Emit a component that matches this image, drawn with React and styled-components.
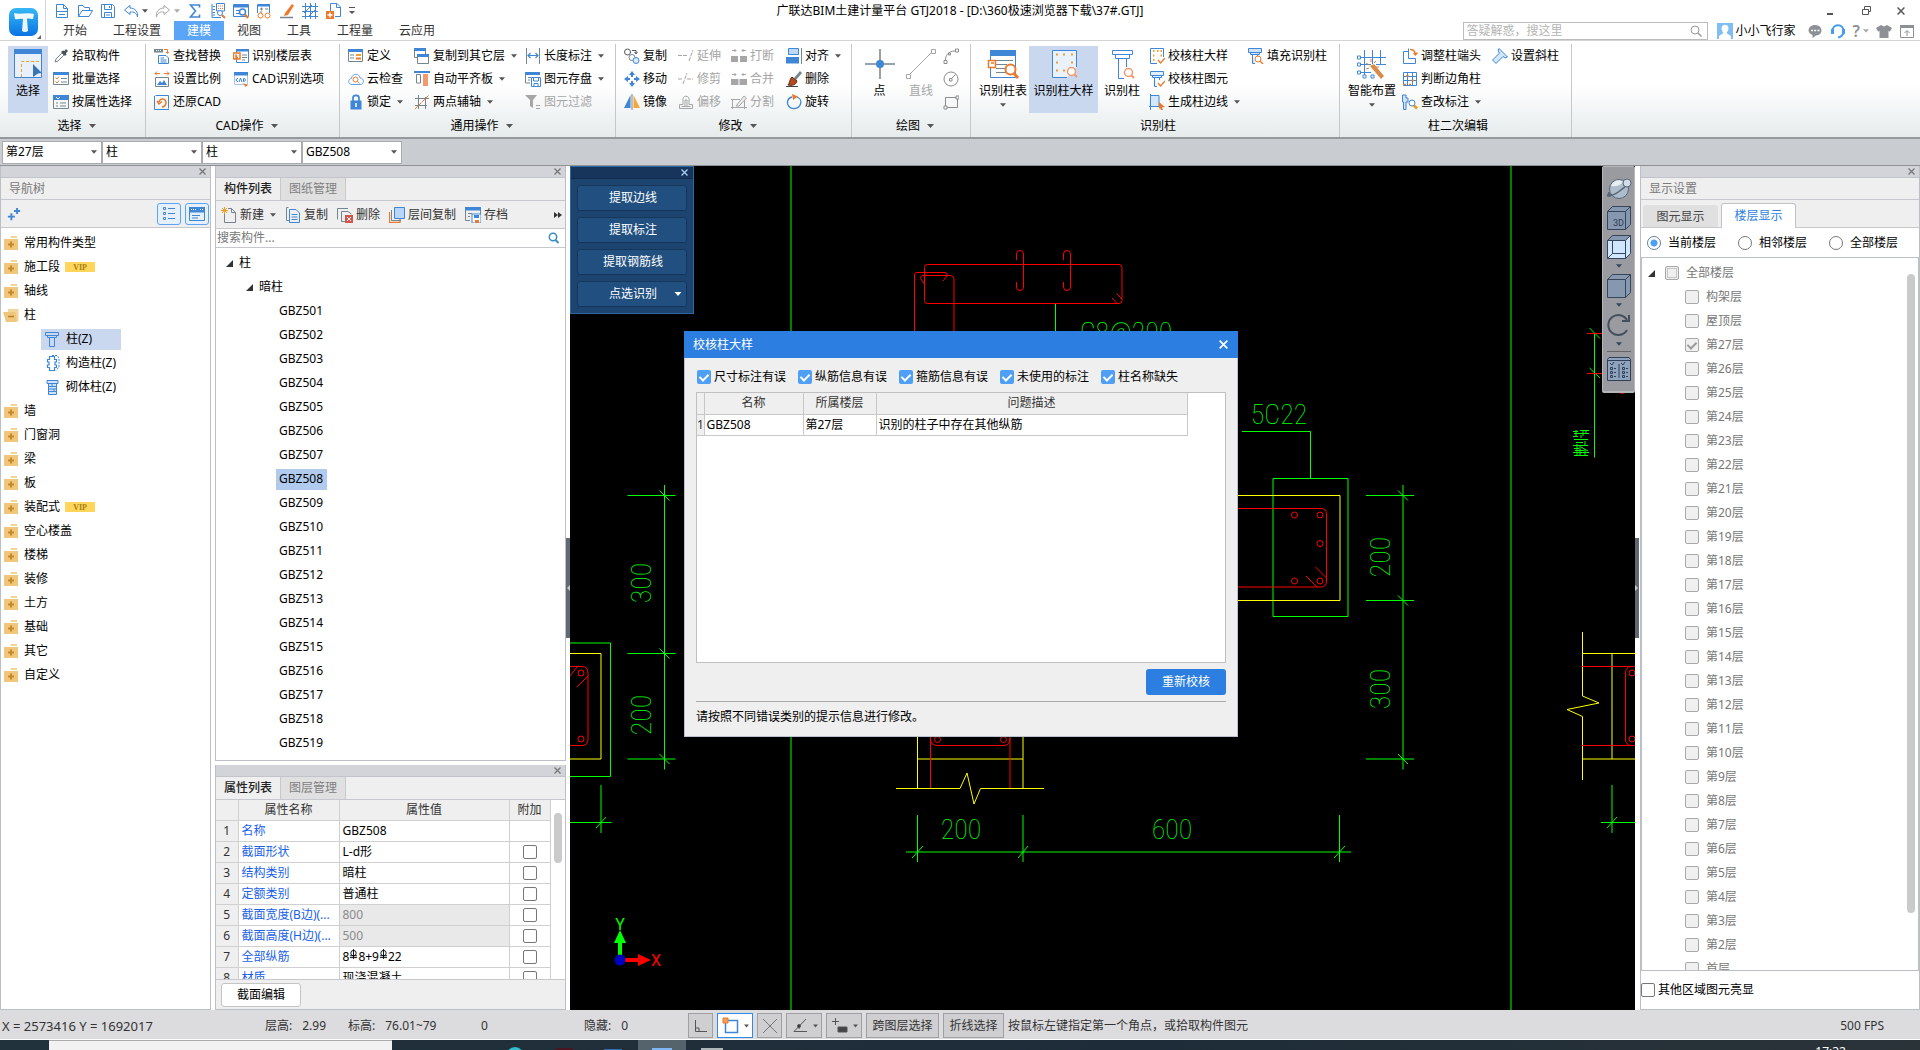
import React from 'react';
import styled, { createGlobalStyle } from 'styled-components';

const BLUE = '#3f86d6';
const ORANGE = '#ec7a2c';
const SLATE = '#75858f';
const DIM = '#a6a6a6';

const GlobalStyle = createGlobalStyle`
  * {
    box-sizing: border-box;
  }
  body {
    margin: 0;
    overflow: hidden;
    background: #fff;
    color: #000;
    font-family: 'Noto Sans', 'Noto Sans CJK SC', sans-serif;
    font-size: 12px;
    line-height: 16px;
  }
  button, input, select {
    font: inherit;
    color: inherit;
    margin: 0;
    padding: 0;
  }
  button {
    border: 0;
    background: none;
    white-space: nowrap;
  }
  svg {
    display: block;
    flex: none;
  }
`;

const Page = styled.div`
  display: flex;
  flex-direction: column;
  height: 100vh;
  overflow: hidden;
`;

/* ---------- icons ---------- */

const icons = {
  newFile: <g stroke={BLUE}><path d="M2.5 14.500V1.500H9.500L13.500 5.500V14.500ZM9.500 1.500V5.500H13.500M2.500 8.500H13.500M5 11.500H11" /></g>,
  open: <g stroke={BLUE}><path d="M1.500 13.500V2.500H6L7.500 4.500H12.500V7M1.500 13.500L5 7.500H15.500L12 13.500Z" /></g>,
  save: <g stroke={BLUE}><path d="M1.500 1.500H12.500L14.500 3.500V14.500H1.500ZM4.500 1.500V6.500H11.500V1.500M4.500 14.500V9.500H11.500V14.500M9.500 3V5M6 12H10" /></g>,
  undo: <path d="M7 2.500L1.500 7L7 11.500V9C11 8.500 13.500 10 14.500 14C15.500 9 12 5 7 5Z" stroke={BLUE} />,
  redo: <path d="M9 2.500L14.500 7L9 11.500V9C5 8.500 2.500 10 1.500 14C.500 9 4 5 9 5Z" stroke={DIM} />,
  sigma: <path d="M12.500 4.500V2H3.500L8.500 8L3.500 14H12.500V11.500" stroke={BLUE} strokeWidth="1.600" />,
  ruler: <g stroke={BLUE}><path d="M2 1V14.500H11M2.500 3.500H5M2.500 6.500H5M2.500 9.500H5M2.500 12H5M6.500 .500H14.500V8H6.500Z" /><path d="M8 3H13M8 5.500H13" stroke={ORANGE} strokeDasharray="1 1" /><circle cx="10" cy="10" r="2.500" fill="#fff" /><path d="M12 12L15 15" stroke={ORANGE} strokeWidth="2" /></g>,
  tableFind: <g><path d="M.500 1.500H15.500V13.500H.500Z" stroke={BLUE} /><path d="M1 1H15V4.500H1Z" fill={BLUE} /><path d="M3 7.500H7M3 10.500H6" stroke={BLUE} /><circle cx="9.500" cy="9" r="3" stroke={BLUE} fill="#fff" strokeWidth="1.500" /><path d="M12 11.500L15 15" stroke={ORANGE} strokeWidth="2" /></g>,
  glasses: <g><path d="M1.500 10V1.500H13.500V10" stroke={BLUE} /><path d="M2 1H14V3.500H2Z" fill={BLUE} /><path d="M4 6H7M9 6H12M5.500 4.500V7.500M4 9H6" stroke={SLATE} /><circle cx="4.500" cy="12.500" r="2.500" stroke={ORANGE} /><circle cx="11.500" cy="12.500" r="2.500" stroke={ORANGE} /></g>,
  brush: <g><path d="M6 10L13 1L15 2.500L9 12L5 13Z" fill={ORANGE} /><path d="M1 14.500H14" stroke={SLATE} strokeWidth="1.500" /></g>,
  grid: <path d="M3.500 0V16M8.500 0V16M13.500 0V16M0 3.500H16M0 8.500H16M0 13.500H16M2 10L10 2M6 14L14 6" stroke={BLUE} />,
  pageAdd: <g><path d="M5.500 8V.500H12L15.500 4V13.500H10M11.500 .500V4.500H15" stroke={BLUE} /><path d="M1 8H9V16H1Z" fill={ORANGE} /><path d="M5 9.500V14.500M2.500 12H7.500" stroke="#fff" strokeWidth="1.500" /></g>,
  dropper: <g><path d="M2 14L3 11L9 5L11 7L5 13Z" stroke={SLATE} /><path d="M8 4L10 2.500L11.500 3L13 1L15 3L13 5L13.500 6.500L12 8Z" fill="#4a5358" /></g>,
  listCheck: <g><path d="M.500 2.500H15.500V13.500H.500Z" stroke={SLATE} /><path d="M0 1H16V4H0Z" fill={BLUE} /><path d="M2.500 6.500L4 8L6 5.500M2.500 10.500L4 12L6 9.500" stroke={ORANGE} /><path d="M8 7.500H14M8 11H14" stroke={SLATE} /></g>,
  listProp: <g><path d="M.500 2.500H15.500V14.500H.500Z" stroke={SLATE} /><path d="M0 1H16V6H0Z" fill={BLUE} /><path d="M3 3L5 5L7 3" stroke="#fff" /><path d="M3 9H5M3 12H5M7 9H13M7 12H13" stroke={SLATE} /></g>,
  findReplace: <g><path d="M0 1H9V4.500H0Z" fill={SLATE} /><path d="M2 2.500H7.500" stroke="#fff" strokeDasharray="1 1" /><path d="M10 1.500H13.500V5M12 4L13.500 5.500L15 4" stroke={ORANGE} /><path d="M4.500 7.500H12L14.500 10V15.500H4.500ZM6.500 10H10M6.500 12H12.500M6.500 14H12.500" stroke={BLUE} /></g>,
  scale: <g><path d="M1 2.500H6M3 .500L1 2.500L3 4.500M10 2.500H15M13 .500L15 2.500L13 4.500" stroke={ORANGE} /><path d="M1.500 6.500H14.500V15.500H1.500Z" stroke={SLATE} /><path d="M3 14L6 10L8 12L10 9L13 14Z" fill={BLUE} /></g>,
  restore: <g><path d="M.500 2V15.500H15M1.500 1.500H14.500V14.500" stroke={BLUE} /><path d="M5 8C6 4 11 4 12 8C12.500 11 10 13 8 13M3 7L5 10L8 7.500" stroke={ORANGE} strokeWidth="1.500" /></g>,
  floorTable: <g><path d="M3.500 1.500H15.500V14.500H3.500Z" stroke={BLUE} /><path d="M3 1H16V3.500H3Z" fill={BLUE} /><path d="M9 7H14M9 9.500H14M9 12H12" stroke={SLATE} /><path d="M.500 5H7V11H.500ZM3 6.500V9.500H5" stroke={ORANGE} strokeWidth="1.500" fill="#fff" /></g>,
  cadOption: <g><path d="M1.500 1.500H14.500V13.500H1.500Z" stroke="#a9c4e4" /><path d="M1 1H15V4.500H1Z" fill={BLUE} /><path d="M5 7.500C2.500 7 2.500 11 5 10.500M6 11L7.500 7L9 11M10.500 7.500V10.500C13 11 13 7 10.500 7.500" stroke={BLUE} /><path d="M10 12L15 14L12.500 16Z" fill={ORANGE} /></g>,
  define: <g><path d="M.500 1.500H14.500V13.500H.500Z" stroke={SLATE} /><path d="M0 1H15V4H0Z" fill={BLUE} /><path d="M2 7H6M2 10H6" stroke={SLATE} /><path d="M8 6H13V8H8Z" fill="#f0a030" /><path d="M8 9.500H13V11.500H8Z" fill={ORANGE} /></g>,
  cloud: <g><path d="M4 13.500C-.500 13.500 0 7.500 3.500 7.500C4 2 11.500 2 12 7C16.500 7 16.500 13.500 12 13.500Z" stroke="#5aa2ea" /><circle cx="7.500" cy="8.500" r="2.500" stroke={ORANGE} /><path d="M9.500 10.500L11.500 12.500" stroke={ORANGE} /></g>,
  lock: <g><path d="M5 7V4C5 .500 11 .500 11 4V7" stroke={BLUE} strokeWidth="1.700" /><path d="M2.500 6.500H13.500V15.500H2.500Z" fill={BLUE} /><path d="M8 9V13" stroke="#fff" strokeWidth="1.500" /></g>,
  copyFloor: <g><path d="M.500 1.500H11.500V9.500H.500Z" stroke={SLATE} fill="#fff" /><path d="M0 0H12V3H0Z" fill={BLUE} /><path d="M3.500 6.500H14.500V15.500H3.500Z" stroke={SLATE} fill="#fff" /><path d="M3 6H15V9H3Z" fill={BLUE} /></g>,
  flatSlab: <g><path d="M0 1H16" stroke={BLUE} strokeWidth="2" /><path d="M2.500 3.500H6.500V12H2.500Z" stroke={SLATE} /><path d="M9 3H14V15H9Z" fill="#f29a6c" /></g>,
  auxAxis: <g><path d="M1 4.500H15M1 11.500H13M4.500 1V15M11.500 3V15" stroke={SLATE} /><path d="M1 15L15 1" stroke={ORANGE} strokeDasharray="4 1" /></g>,
  lengthDim: <g><path d="M1.500 0V16M14.500 0V16" stroke={SLATE} /><path d="M3 7.500H13M5.500 5L3 7.500L5.500 10M10.500 5L13 7.500L10.500 10" stroke={BLUE} strokeWidth="1.200" /></g>,
  storeItem: <g><path d="M.500 2.500H14.500M.500 2V12H5M3 6.500H6M3 9H5" stroke={SLATE} /><path d="M0 1H15V4H0Z" fill={BLUE} /><path d="M6.500 6.500H15.500V15.500H6.500Z" fill="#fff" stroke={BLUE} /><path d="M8.500 7V10H13.500V7M9 15V12.500H13V15" stroke={BLUE} /></g>,
  filter: <path d="M0 1H12L8 6V14L5 12V6ZM11 11H15V12H11ZM11 14H15V15H11Z" fill={DIM} />,
  copy: <g><circle cx="3.500" cy="4" r="3" stroke="#555" /><path d="M8 2.500H12V5M10.500 4L12 6L13.500 4" stroke="#555" /><circle cx="8" cy="9.500" r="3" stroke={SLATE} fill="#fff" /><circle cx="12" cy="12.500" r="3" stroke={BLUE} fill="#d9eafc" /></g>,
  move: <g fill={BLUE}><path d="M8 0L11 4H5ZM8 16L11 12H5ZM0 8L4 5V11ZM16 8L12 5V11Z" /><path d="M7 4H9V6H7ZM7 10H9V12H7ZM4 7H6V9H4ZM10 7H12V9H10Z" /></g>,
  mirror: <g><path d="M6.500 1V14H0Z" fill={BLUE} /><path d="M9.500 1V14H16Z" fill="#f2a93b" /><path d="M8 0V16" stroke={SLATE} /></g>,
  extend: <path d="M0 7.500H10M11 13L15 2" stroke={DIM} strokeDasharray="4 1" />,
  trim: <path d="M0 8H5M5 13L9 2M9 8H15" stroke={DIM} strokeDasharray="4 1" />,
  offset: <path d="M1.500 14.500H14.500V10.500H11V6C12 1 4 1 5 6V10.500H1.500ZM3.500 12.500H12.500M7 12V6H9V12" stroke={DIM} />,
  split: <g><path d="M1 2.500H5M3.500 1L5 2.500L3.500 4M15 2.500H11M12.500 1L11 2.500L12.500 4" stroke={DIM} /><path d="M0 8H7V14H0ZM9 8H16V14H9Z" fill={DIM} /></g>,
  merge: <g><path d="M1 3.500H5M3.500 2L5 3.500L3.500 5M15 3.500H11M12.500 2L11 3.500L12.500 5" stroke={DIM} /><path d="M0 8H7.500V14H0ZM8.500 8H16V14H8.500Z" fill={DIM} /></g>,
  cut: <g stroke={DIM}><path d="M0 5.500H9M1.500 5V15M0 13.500H16M13.500 6V15" /><path d="M5 12L13 2L15.500 4L8 12Z" fill="#eee" /></g>,
  align: <g><path d="M2.500 .500H12.500V6.500H2.500Z" fill="#bcd9f7" stroke={BLUE} /><path d="M0 9H13V15.500H0Z" fill={BLUE} /><path d="M15.500 0V16" stroke={SLATE} /></g>,
  erase: <g><path d="M8 7L14 0L16 2L10 9Z" fill={SLATE} /><path d="M6 6L11 10C10 14 6 15 2 14C4 12 3 9 6 6Z" fill="#b54a1c" stroke="#5a2a12" /><path d="M0 15.500H12" stroke="#444" /></g>,
  rotate: <g><path d="M6 3C1.500 4 0 9 3 12.500C6 16 13 15 14.500 10C15.500 7 14 4 11 3" stroke={BLUE} strokeWidth="1.300" /><path d="M6 0L12 2.500L7 6Z" fill={ORANGE} /></g>,
  arc: <g stroke="#8b8b8b"><path d="M2.500 13C2 8 5 3 12 3" /><path d="M1 12.500H4V15.500H1ZM12.500 1H15.500V4H12.500ZM5.500 5H7.500V7H5.500Z" fill="#fff" /></g>,
  circle: <g stroke="#8b8b8b"><circle cx="8" cy="8" r="7" /><path d="M6.500 7.500H9V10H6.500ZM9 7L12.500 3.500" /></g>,
  rect: <g stroke="#8b8b8b"><path d="M2.500 3.500H14.500V13.500H2.500Z" /><path d="M1 12H4V15H1ZM13 2H16V5H13Z" fill="#fff" /></g>,
  checkBig: <g><path d="M1.500 15.500V.500H14.500V9M1.500 15.500H8" stroke={BLUE} /><path d="M4 3H5.500M8 3H9.500M11.500 3H13M4 7.500H5.500M4 12H5.500M11.500 7.500H13" stroke="#f0a030" strokeWidth="1.800" /><path d="M9 12L11.500 15L16 10" stroke={ORANGE} strokeWidth="1.300" /></g>,
  checkCol: <g><path d="M1.500 .500H14.500V4.500H1.500ZM3.500 4.500H12.500V6.500H3.500ZM5.500 6.500V15.500H8M10.500 6.500V9" stroke={BLUE} fill="#e2effc" /><path d="M9 12L11.500 15L16 10" stroke={ORANGE} strokeWidth="1.300" /></g>,
  colEdge: <g><path d="M1.500 0V16M0 12.500H10V1.500H1.500" stroke={BLUE} fill="#d4e6f9" /><path d="M10 8L16 13L13 13.500L14 16L12 16L11 14L10 15Z" fill={ORANGE} /></g>,
  fillCol: <g><path d="M.500 .500H13.500V4.500H.500ZM2.500 4.500H11.500V6.500H2.500ZM4.500 6.500V15.500H7M9.500 6.500V8" stroke={BLUE} fill="#cfe2f7" /><circle cx="10" cy="11" r="3" stroke={ORANGE} fill="#fff" /><path d="M12 13L15 16" stroke={ORANGE} strokeWidth="1.500" /></g>,
  colHead: <g><path d="M6.500 3.500H1.500V15.500H13.500V10.500H6.500V.500" stroke={BLUE} /><path d="M8 1.500C11 1.500 13 3 13.500 6M11.500 5L13.500 7L15.500 4.500" stroke={ORANGE} strokeWidth="1.300" /></g>,
  cornerCol: <g><path d="M1.500 1.500H14.500V14.500H1.500ZM1.500 5.500H14.500M1.500 9.500H14.500M5.500 1.500V14.500M10.500 1.500V14.500" stroke={BLUE} /><path d="M4 5H7M9 9.500H12M1 13.500H4M7 13.500H9" stroke={ORANGE} strokeWidth="1.500" /></g>,
  dimFind: <g><path d="M.500 1H4V4H6V8H4V15.500H1.500V8H.500Z" fill="#cfe2f7" stroke={BLUE} /><circle cx="10" cy="9" r="3" stroke={BLUE} fill="#fff" /><path d="M12 11.500L15 14.500" stroke="#e59a1c" strokeWidth="2.500" /></g>,
  slantCol: <path d="M7 .500L15.500 9L13 10L11 8.500L4 15.500L.500 12L7.500 5L6 3Z" fill="#d4e6f9" stroke={BLUE} />,
  docNew: <g><path d="M3.500 4V15.500H14.500V5.500L10.500 1.500H7M10.500 1.500V5.500H14.500" stroke={SLATE} /><path d="M3.500 0V7M0 3.500H7M1 1L6 6M6 1L1 6" stroke="#efa02c" /></g>,
  docCopy: <g><path d="M3.500 .500H1.500V13.500H4" stroke={SLATE} /><path d="M4.500 2.500H11L14.500 6V15.500H4.500ZM6.500 7.500H12.500M6.500 10H12.500M6.500 12.500H12.500" stroke={BLUE} /></g>,
  docDel: <g><path d="M11 1.500H.500V12.500M8 14.500H4.500V4.500H11L14.500 7" stroke={SLATE} /><path d="M8 8H16V16H8Z" fill="#d2554c" /><path d="M10 10L14 14M14 10L10 14" stroke="#fff" /></g>,
  layerCopy: <g><path d="M.500 5V15.500H11V12" stroke={ORANGE} strokeWidth="1.300" /><path d="M2.500 3V13.500H12" stroke={SLATE} /><path d="M5.500 .500H15.500V11.500H5.500Z" fill="#b7d6f8" stroke={BLUE} /></g>,
  archive: <g><path d="M.500 1.500H15.500M.500 1V13.500H5M3 6.500H7M3 9.500H5M15.500 2V7" stroke={SLATE} /><path d="M0 0H16V3.500H0Z" fill={BLUE} /><path d="M7 7H16V16H7Z" fill="#fff" stroke={BLUE} /><path d="M9 8H14V11H9Z" fill={BLUE} /><path d="M10 13H14V16H10Z" fill={ORANGE} /></g>,
  search: <g><circle cx="7" cy="7" r="4" stroke="#9a9a9a" /><path d="M10 10L13.500 13.500" stroke="#9a9a9a" strokeWidth="1.500" /></g>,
  searchBlue: <g><circle cx="8" cy="7" r="3.700" stroke="#3b8bc4" strokeWidth="1.500" /><path d="M10.500 10L13.500 13" stroke="#3b8bc4" strokeWidth="2" /></g>,
  avatar: <g><path d="M0 0H16V16H0Z" fill="#7fbdf2" /><path d="M4.500 5C4.500 .500 11.500 .500 11.500 5C11.500 8 10 9 9.500 10L14 13V16H2V13L6.500 10C6 9 4.500 8 4.500 5Z" fill="#fff" /></g>,
  chat: <g><path d="M8 2C16 2 17 12 9 12.500L5.500 15V12C-1 10 1 2 8 2Z" fill="#8d9196" /><path d="M4 7.500H6M7.200 7.500H9.200M10.500 7.500H12.500" stroke="#fff" strokeWidth="1.500" /></g>,
  headset: <g><path d="M2.500 9C1.500 0 14.500 0 13.500 9C13 12 11 14 8 14.500" stroke="#459cf2" strokeWidth="2" /><path d="M1 6H4V11H1ZM12 6H15V11H12Z" fill="#459cf2" /></g>,
  shirt: <path d="M5 2L8 3.500L11 2L16 5L14 8.500L12.500 8V15H3.500V8L2 8.500L0 5Z" fill="#8d9196" />,
  collapse: <g><path d="M1.500 2.500H14.500V14.500H1.500Z" stroke="#8d9196" /><path d="M1 2H15V5H1Z" fill="#8d9196" /><path d="M8 13V8M5.500 10L8 7.500L10.500 10" stroke="#8d9196" /></g>,
  folder: <g><path d="M1 4H15V15H1Z" fill="#f0c67c" /><path d="M8 1H14V3H7Z" fill="#f3d59c" /><path d="M5 9.500H11M8 6.500V12.500" stroke="#c58a2c" strokeWidth="2" /></g>,
  folderOpen: <g><path d="M5 2H15.500V14H4Z" fill="#f3d59c" /><path d="M0 5H12.500L14 15H3Z" fill="#f0c67c" /><path d="M5 9.500H11" stroke="#b58030" strokeWidth="1.500" /></g>,
  column: <path d="M1.500 1.500H14.500V4.500H1.500ZM3.500 4.500H12.500V6.500H3.500ZM5.500 6.500H10.500V15.500H5.500Z" stroke={BLUE} />,
  tieColumn: <g stroke={BLUE}><path d="M8 .500H13L15 3V12L12 15.500" strokeDasharray="2 1" /><path d="M5.500 1.500H10.500V4.500H12.500V7H11V10H12.500V12.500H10.500V15.500H5.500V12.500H3.500V10H5V7H3.500V4.500H5.500Z" fill="#fff" strokeWidth="1.200" /></g>,
  brickColumn: <g stroke={BLUE}><path d="M3 1.500H14V4.500H3ZM4.500 4.500H12.500V15.500H4.500Z" fill="#cfe2f7" /><path d="M4.500 7.500H12.500M4.500 10H12.500M4.500 12.500H12.500M8 5V8M10 10V13" /></g>,
  plus2: <path d="M5 7V15M1 11H9M11.500 1V8M8 4.500H15" stroke={BLUE} strokeWidth="2.200" />,
};

const Icon = ({ name, size = 16 }) => (
  <svg width={size} height={size} viewBox="0 0 16 16" fill="none" aria-hidden="true">
    {icons[name]}
  </svg>
);

const Caret = ({ color = '#555', size = 7 }) => (
  <svg width={size} height="4" viewBox="0 0 7 4" aria-hidden="true">
    <path d="M0 0H7L3.500 4Z" fill={color} />
  </svg>
);

const Expander = () => (
  <svg width="7" height="7" viewBox="0 0 7 7" aria-hidden="true">
    <path d="M7 0V7H0Z" fill="#333" />
  </svg>
);

const Cross = ({ size = 7, color = '#777' }) => (
  <svg width={size} height={size} viewBox="0 0 7 7" aria-hidden="true">
    <path d="M.500 .500L6.500 6.500M6.500 .500L.500 6.500" stroke={color} strokeWidth="1.300" />
  </svg>
);

/* ---------- header ---------- */

const Header = styled.header`
  display: grid;
  grid-template-columns: 46px 1fr auto 1fr 46px;
  grid-template-rows: 21px 19px;
  border-bottom: 1px solid #d4d4d4;
  flex: none;
`;

const AppMenu = styled.button`
  grid-row: 1 / 3;
  display: flex;
  align-items: center;
  justify-content: center;
  border-right: 1px solid #d4d4d4;
`;

const QuickBar = styled.div`
  display: flex;
  align-items: center;
  gap: 7px;
  padding-left: 8px;
`;

const IconButton = styled.button`
  display: flex;
  align-items: center;
  gap: 3px;
  flex: none;
`;

const Title = styled.h1`
  margin: 0;
  font-size: 12px;
  font-weight: 400;
  line-height: 21px;
  white-space: nowrap;
`;

const WindowButtons = styled.div`
  display: flex;
  align-items: center;
  justify-content: flex-end;
  gap: 26px;
  padding-right: 2px;
`;

const CloseSlot = styled.div`
  display: flex;
  align-items: center;
  justify-content: center;
  padding-left: 8px;
`;

const Tabs = styled.nav`
  display: flex;
  align-items: flex-end;
  padding-left: 4px;
`;

const Tab = styled.button`
  height: 19px;
  padding: 0 13px;
  color: ${(p) => (p.$active ? '#fff' : '#333')};
  background: ${(p) => (p.$active ? '#5aa5f6' : 'transparent')};
`;

const UserBar = styled.div`
  grid-column: 4 / 6;
  display: flex;
  align-items: center;
  justify-content: flex-end;
  gap: 7px;
  padding-right: 5px;
  white-space: nowrap;
`;

const HelpSearch = styled.label`
  display: flex;
  align-items: center;
  width: 245px;
  height: 18px;
  padding-right: 3px;
  border: 1px solid #bbb;
  margin-right: 2px;

  input {
    flex: 1;
    min-width: 0;
    padding-left: 3px;
    border: 0;
    outline: 0;
    background: none;
  }
  input::placeholder {
    color: #b5b5b5;
  }
`;

const UserName = styled.span`
  margin: 0 4px 0 -4px;
`;

const HelpButton = styled(IconButton)`
  font-size: 16px;
  font-weight: 600;
  color: #8d9196;
`;

const menuTabs = ['开始', '工程设置', '建模', '视图', '工具', '工程量', '云应用'];

const AppHeader = () => (
  <Header>
    <AppMenu aria-label="主菜单">
      <svg width="42" height="40" viewBox="0 0 42 40">
        <defs>
          <linearGradient id="logo" x1="0" y1="0" x2="0" y2="1">
            <stop offset="0" stopColor="#35b8f5" />
            <stop offset="1" stopColor="#0a74e4" />
          </linearGradient>
        </defs>
        <rect x="7" y="8" width="29" height="28" rx="7" fill="url(#logo)" />
        <path d="M12 13C18 15 25 12 32 14L31 19C28 19 26 18 25 19L26 31Q23 33 20 31L21 19C18 18 16 20 13 19Z" fill="#fff" opacity=".92" />
        <path d="M39 35V39H35Z" fill="#666" />
      </svg>
    </AppMenu>
    <QuickBar>
      <IconButton aria-label="新建"><Icon name="newFile" /></IconButton>
      <IconButton aria-label="打开"><Icon name="open" /></IconButton>
      <IconButton aria-label="保存"><Icon name="save" /></IconButton>
      <IconButton aria-label="撤销"><Icon name="undo" /><Caret size={6} /></IconButton>
      <IconButton aria-label="恢复"><Icon name="redo" /><Caret size={6} color="#aaa" /></IconButton>
      <IconButton aria-label="汇总计算"><Icon name="sigma" /></IconButton>
      <IconButton aria-label="测量"><Icon name="ruler" /></IconButton>
      <IconButton aria-label="查看工程量"><Icon name="tableFind" /></IconButton>
      <IconButton aria-label="查看计算式"><Icon name="glasses" /></IconButton>
      <IconButton aria-label="格式刷"><Icon name="brush" /></IconButton>
      <IconButton aria-label="轴网"><Icon name="grid" /></IconButton>
      <IconButton aria-label="添加图纸"><Icon name="pageAdd" /></IconButton>
      <IconButton aria-label="自定义">
        <svg width="8" height="9" viewBox="0 0 8 9"><path d="M1 1H7V2H1ZM1 5H7L4 8Z" fill="#555" /></svg>
      </IconButton>
    </QuickBar>
    <Title>广联达BIM土建计量平台 GTJ2018 - [D:\360极速浏览器下载\37#.GTJ]</Title>
    <WindowButtons>
      <IconButton aria-label="最小化">
        <svg width="12" height="10" viewBox="0 0 12 10"><path d="M3 8H9" stroke="#555" strokeWidth="2" /></svg>
      </IconButton>
      <IconButton aria-label="还原">
        <svg width="10" height="9" viewBox="0 0 10 9" fill="none"><path d="M2.500 3V.500H8.500V5.500H7M.500 3.500H6.500V8.500H.500Z" stroke="#555" /></svg>
      </IconButton>
    </WindowButtons>
    <CloseSlot>
      <IconButton aria-label="关闭"><Cross size={8} color="#555" /></IconButton>
    </CloseSlot>
    <Tabs>
      {menuTabs.map((t) => <Tab key={t} $active={t === '建模'}>{t}</Tab>)}
    </Tabs>
    <UserBar>
      <HelpSearch>
        <input type="text" placeholder="答疑解惑，搜这里" aria-label="答疑解惑" />
        <Icon name="search" />
      </HelpSearch>
      <Icon name="avatar" />
      <UserName>小小飞行家</UserName>
      <IconButton aria-label="消息"><Icon name="chat" /></IconButton>
      <IconButton aria-label="客服"><Icon name="headset" /></IconButton>
      <HelpButton aria-label="帮助">?<Caret size={6} color="#aaa" /></HelpButton>
      <IconButton aria-label="皮肤"><Icon name="shirt" /></IconButton>
      <IconButton aria-label="收起功能区"><Icon name="collapse" /></IconButton>
    </UserBar>
  </Header>
);

/* ---------- ribbon ---------- */

const RibbonBar = styled.div`
  display: flex;
  flex: none;
  height: 98px;
  padding-top: 3px;
  background: linear-gradient(#fff 45%, #e6ebec);
  border-bottom: 2px solid #95999c;
`;

const Group = styled.section`
  display: grid;
  grid-template-columns: ${(p) => p.$cols};
  grid-template-rows: 70px 23px;
  width: ${(p) => p.$width}px;
  padding-left: ${(p) => p.$pad || 8}px;
  border-right: 1px solid #c4c8ca;
`;

const GroupName = styled.div`
  grid-column: 1 / -1;
  display: flex;
  align-items: center;
  justify-content: center;
  gap: 7px;
`;

const Stack = styled.div`
  display: grid;
  grid-template-rows: repeat(3, 23px);
  align-content: start;
  padding-left: ${(p) => p.$inset || 0}px;
`;

const Tool = styled.button`
  display: flex;
  align-items: center;
  gap: 3px;
  color: ${(p) => (p.disabled ? '#a6a6a6' : '#000')};

  span + svg {
    margin-left: 3px;
  }
`;

const BigTool = styled.button`
  display: flex;
  flex-direction: column;
  align-items: center;
  gap: 4px;
  height: 67px;
  margin-top: 2px;
  padding-top: 3px;
  color: ${(p) => (p.disabled ? '#a6a6a6' : '#000')};
  background: ${(p) => (p.$active ? '#c9d8ef' : 'transparent')};
`;

const T = ({ icon, children, caret, off }) => (
  <Tool disabled={off}>
    <Icon name={icon} />
    <span>{children}</span>
    {caret && <Caret size={6} />}
  </Tool>
);

const Big = ({ children, label, caret, active, off }) => (
  <BigTool $active={active} disabled={off}>
    <svg width="32" height="30" viewBox="0 0 32 30" fill="none">{children}</svg>
    <span>{label}</span>
    {caret && <Caret size={6} />}
  </BigTool>
);

const Ribbon = () => (
  <RibbonBar>
    <Group $cols="40px 1fr" $width={146}>
      <Big label="选择" active>
        <path d="M2.500 1.500H29.500V28.500H2.500Z" stroke={BLUE} fill="#e9f0fa" />
        <path d="M2 0H30V5H2Z" fill={BLUE} />
        <path d="M9.500 28V12.500H29" stroke="#eda32e" strokeDasharray="3 2" />
        <path d="M21 15L30 24L26 24.500L21 28Z" fill="#3b73b5" />
      </Big>
      <Stack $inset={5}>
        <T icon="dropper">拾取构件</T>
        <T icon="listCheck">批量选择</T>
        <T icon="listProp">按属性选择</T>
      </Stack>
      <GroupName>选择 <Caret /></GroupName>
    </Group>
    <Group $cols="79px 1fr" $width={194}>
      <Stack>
        <T icon="findReplace">查找替换</T>
        <T icon="scale">设置比例</T>
        <T icon="restore">还原CAD</T>
      </Stack>
      <Stack>
        <T icon="floorTable">识别楼层表</T>
        <T icon="cadOption">CAD识别选项</T>
      </Stack>
      <GroupName>CAD操作 <Caret /></GroupName>
    </Group>
    <Group $cols="66px 111px 1fr" $width={276}>
      <Stack>
        <T icon="define">定义</T>
        <T icon="cloud">云检查</T>
        <T icon="lock" caret>锁定</T>
      </Stack>
      <Stack>
        <T icon="copyFloor" caret>复制到其它层</T>
        <T icon="flatSlab" caret>自动平齐板</T>
        <T icon="auxAxis" caret>两点辅轴</T>
      </Stack>
      <Stack>
        <T icon="lengthDim" caret>长度标注</T>
        <T icon="storeItem" caret>图元存盘</T>
        <T icon="filter" off>图元过滤</T>
      </Stack>
      <GroupName>通用操作 <Caret /></GroupName>
    </Group>
    <Group $cols="54px 53px 55px 1fr" $width={236}>
      <Stack>
        <T icon="copy">复制</T>
        <T icon="move">移动</T>
        <T icon="mirror">镜像</T>
      </Stack>
      <Stack>
        <T icon="extend" off>延伸</T>
        <T icon="trim" off>修剪</T>
        <T icon="offset" off>偏移</T>
      </Stack>
      <Stack>
        <T icon="split" off>打断</T>
        <T icon="merge" off>合并</T>
        <T icon="cut" off>分割</T>
      </Stack>
      <Stack>
        <T icon="align" caret>对齐</T>
        <T icon="erase">删除</T>
        <T icon="rotate">旋转</T>
      </Stack>
      <GroupName>修改 <Caret /></GroupName>
    </Group>
    <Group $cols="39px 44px 1fr" $width={119}>
      <Big label="点">
        <path d="M16 0V11M16 19V30M1 15H12M20 15H31" stroke={SLATE} strokeWidth="1.500" />
        <circle cx="16" cy="15" r="4" fill={BLUE} />
      </Big>
      <Big label="直线" off>
        <path d="M4 26L27 3" stroke={DIM} />
        <path d="M1.500 25.500H5.500V29.500H1.500ZM26.500 .500H30.500V4.500H26.500Z" stroke={DIM} fill="#fff" />
      </Big>
      <Stack>
        <Tool disabled aria-label="弧"><Icon name="arc" /></Tool>
        <Tool disabled aria-label="圆"><Icon name="circle" /></Tool>
        <Tool disabled aria-label="矩形"><Icon name="rect" /></Tool>
      </Stack>
      <GroupName>绘图 <Caret /></GroupName>
    </Group>
    <Group $cols="52px 69px 48px 102px 1fr" $width={369} $pad={6}>
      <Big label="识别柱表" caret>
        <path d="M3.500 2.500H28.500V28.500H3.500Z" stroke={BLUE} fill="#fff" />
        <path d="M3 1H29V7H3Z" fill={BLUE} />
        <path d="M9 11.500H26M9 15.500H20M9 19.500H19M9 23.500H20" stroke={SLATE} />
        <path d="M1.500 11.500H8.500V18.500H1.500ZM4 14H7" stroke={ORANGE} strokeWidth="1.500" fill="#fff" />
        <circle cx="23.500" cy="20.500" r="5" stroke={ORANGE} strokeWidth="2" fill="#fff" />
        <path d="M27 24.500L31 29" stroke={ORANGE} strokeWidth="3" />
      </Big>
      <Big label="识别柱大样" active>
        <path d="M19 28.500H4.500V1.500H28.500V18" stroke={BLUE} fill="#e9f1fb" />
        <path d="M8 5.500H10M15 5.500H17M23 5.500H25M8 13.500H10M23 13.500H25M8 21.500H10M15 21.500H17" stroke="#f0a030" strokeWidth="2" />
        <circle cx="23.500" cy="22.500" r="4" stroke="#f29a6c" strokeWidth="1.500" fill="#fff" />
        <path d="M26 25L29 28" stroke="#f29a6c" strokeWidth="2" />
      </Big>
      <Big label="识别柱">
        <path d="M6.500 1.500H26.500V5.500H6.500ZM9.500 5.500H23.500V9.500H9.500ZM12.500 9.500V29.500H18M20.500 9.500V18" stroke={BLUE} />
        <circle cx="22.500" cy="23.500" r="4" stroke="#f29a6c" strokeWidth="1.500" fill="#fff" />
        <path d="M25 26L28 29" stroke="#f29a6c" strokeWidth="2" />
      </Big>
      <Stack $inset={3}>
        <T icon="checkBig">校核柱大样</T>
        <T icon="checkCol">校核柱图元</T>
        <T icon="colEdge" caret>生成柱边线</T>
      </Stack>
      <Stack>
        <T icon="fillCol">填充识别柱</T>
      </Stack>
      <GroupName>识别柱</GroupName>
    </Group>
    <Group $cols="54px 93px 1fr" $width={232} $pad={5}>
      <Big label="智能布置" caret>
        <path d="M8.500 1V27M16.500 1V15M24.500 1V15M3 8.500H30M3 15.500H15M20 15.500H30M3 23.500H15" stroke={BLUE} />
        <path d="M1.500 7H4.500V10H1.500ZM1.500 14H4.500V17H1.500ZM1.500 22H4.500V25H1.500ZM7 26H10V29H7ZM15 26H18V29H15Z" fill="#fff" stroke={BLUE} />
        <path d="M14 17L18 15L28 27L25 30Z" fill="#d98a4a" />
        <path d="M10 14L13 16M15 10V13M20 12L18 14M10 20L13 19M23 18H20" stroke={ORANGE} />
      </Big>
      <Stack $inset={3}>
        <T icon="colHead">调整柱端头</T>
        <T icon="cornerCol">判断边角柱</T>
        <T icon="dimFind" caret>查改标注</T>
      </Stack>
      <Stack>
        <T icon="slantCol">设置斜柱</T>
      </Stack>
      <GroupName>柱二次编辑</GroupName>
    </Group>
  </RibbonBar>
);

/* ---------- context bar ---------- */

const ContextBar = styled.div`
  display: flex;
  align-items: center;
  flex: none;
  height: 27px;
  padding-left: 2px;
  background: #c9ccd0;
  border-bottom: 1px solid #8e9195;
`;

const Picker = styled.div`
  display: grid;
  grid-template-columns: 1fr 10px;
  align-items: center;
  width: 100px;
  height: 23px;
  background: #fff;
  border: 1px solid #a9abae;

  select {
    grid-area: 1 / 1 / 2 / 3;
    height: 21px;
    padding-left: 3px;
    border: 0;
    background: none;
    appearance: none;
  }
  svg {
    grid-area: 1 / 2;
    pointer-events: none;
  }
`;

const pickers = [
  ['楼层', '第27层'],
  ['构件大类', '柱'],
  ['构件类型', '柱'],
  ['构件', 'GBZ508'],
];

/* ---------- panels ---------- */

const Workspace = styled.main`
  display: flex;
  flex: 1;
  min-height: 0;
`;

const Panel = styled.section`
  display: flex;
  flex-direction: column;
  width: ${(p) => (p.$width ? `${p.$width}px` : 'auto')};
  flex: ${(p) => p.$flex || 'none'};
  min-height: 0;
  border: 1px solid #bcbfc5;
  border-top: 0;
  background: #fff;
`;

const Strip = styled.div`
  display: flex;
  align-items: center;
  justify-content: flex-end;
  flex: none;
  height: 12px;
  padding-right: 4px;
  background: #d3d4da;
  border-bottom: 1px solid #c2c4c9;
`;

const PanelTitle = styled.h2`
  flex: none;
  margin: 0;
  height: 22px;
  padding-left: 8px;
  font-size: 12px;
  font-weight: 400;
  line-height: 21px;
  color: #7a7a7a;
  background: #efefef;
  border-bottom: 1px solid #c6c8cd;
`;

const NavTools = styled.div`
  display: flex;
  align-items: center;
  flex: none;
  gap: 4px;
  height: 28px;
  padding: 0 1px 0 6px;
  background: #efefef;
  border-bottom: 1px solid #c6c8cd;
`;

const ViewButton = styled.button`
  display: flex;
  align-items: center;
  justify-content: center;
  width: 24px;
  height: 22px;
  border: 1px solid #5aa5f6;
  border-radius: 3px;
  background: #e6f0fb;

  &:first-of-type {
    margin-left: auto;
  }
`;

const NavList = styled.ul`
  margin: 0;
  padding: 3px 0 0;
  list-style: none;
`;

const NavItem = styled.li`
  display: flex;
  align-items: center;
  gap: 5px;
  height: 24px;
  padding-left: ${(p) => (p.$child ? 40 : 2)}px;
`;

const NavLeaf = styled.div`
  display: flex;
  align-items: center;
  gap: 6px;
  height: 21px;
  width: 80px;
  padding-left: 3px;
  background: ${(p) => (p.$active ? '#c9d8ef' : 'transparent')};
  white-space: nowrap;
`;

const Vip = styled.span`
  width: 30px;
  height: 10px;
  background: #ffd55c;
  color: #a87f12;
  font: bold 8px/11px 'Liberation Serif', serif;
  text-align: center;
`;

const navItems = [
  { name: '常用构件类型' },
  { name: '施工段', vip: true },
  { name: '轴线' },
  { name: '柱', open: true },
  { name: '柱(Z)', leaf: 'column', active: true },
  { name: '构造柱(Z)', leaf: 'tieColumn' },
  { name: '砌体柱(Z)', leaf: 'brickColumn' },
  { name: '墙' },
  { name: '门窗洞' },
  { name: '梁' },
  { name: '板' },
  { name: '装配式', vip: true },
  { name: '空心楼盖' },
  { name: '楼梯' },
  { name: '装修' },
  { name: '土方' },
  { name: '基础' },
  { name: '其它' },
  { name: '自定义' },
];

const NavPanel = () => (
  <Panel $width={211}>
    <Strip><IconButton aria-label="关闭导航树"><Cross /></IconButton></Strip>
    <PanelTitle>导航树</PanelTitle>
    <NavTools>
      <Icon name="plus2" size={14} />
      <ViewButton aria-label="列表视图">
        <svg width="14" height="14" viewBox="0 0 14 14" fill="none" stroke={BLUE}><path d="M1.500 .500H3.500V2.500H1.500ZM1.500 5.500H3.500V7.500H1.500ZM1.500 10.500H3.500V12.500H1.500ZM6 1.500H13M6 6.500H13M6 11.500H13" /></svg>
      </ViewButton>
      <ViewButton aria-label="窗口视图">
        <svg width="16" height="14" viewBox="0 0 16 14" fill="none" stroke={BLUE}><path d="M.500 .500H15.500V13.500H.500ZM3 8.500H11M3 11H9" /><path d="M0 0H16V5H0Z" fill={BLUE} /><path d="M2 2.500H8M11 2.500H14" stroke="#fff" strokeDasharray="1 1" /></svg>
      </ViewButton>
    </NavTools>
    <NavList>
      {navItems.map((item) => (
        <NavItem key={item.name} $child={!!item.leaf}>
          {item.leaf ? (
            <NavLeaf $active={item.active}><Icon name={item.leaf} />{item.name}</NavLeaf>
          ) : (
            <>
              <Icon name={item.open ? 'folderOpen' : 'folder'} />
              {item.name}
              {item.vip && <Vip>VIP</Vip>}
            </>
          )}
        </NavItem>
      ))}
    </NavList>
  </Panel>
);

const MidColumn = styled.div`
  display: flex;
  flex-direction: column;
  gap: 4px;
  width: 351px;
  margin-left: 4px;
`;

const DockTabs = styled.div`
  display: flex;
  flex: none;
  height: 23px;
  background: #efefef;
  border-bottom: 1px solid #c6c8cd;
`;

const DockTab = styled.button`
  width: 65px;
  border-right: 1px solid #c6c8cd;
  background: ${(p) => (p.$active ? '#efefef' : '#e0e0e1')};
  color: ${(p) => (p.$active ? '#222' : '#808080')};
  font-weight: ${(p) => (p.$active ? 500 : 400)};
`;

const ListTools = styled.div`
  display: flex;
  align-items: center;
  flex: none;
  gap: 9px;
  height: 28px;
  padding: 0 3px 0 5px;
  background: #efefef;
  border-bottom: 1px solid #c6c8cd;

  > button {
    color: #333;
  }
  > :last-child {
    margin-left: auto;
  }
`;

const SearchRow = styled.label`
  display: flex;
  align-items: center;
  flex: none;
  height: 19px;
  padding-right: 4px;
  border-bottom: 1px solid #c6c8cd;

  input {
    flex: 1;
    padding-left: 1px;
    border: 0;
    outline: 0;
  }
  input::placeholder {
    color: #777;
  }
`;

const Tree = styled.div`
  flex: 1;
  min-height: 0;
  overflow: hidden;
  padding-top: 3px;
`;

const TreeRow = styled.div`
  display: flex;
  align-items: center;
  gap: 6px;
  height: 24px;
  padding-left: ${(p) => p.$indent}px;
  color: ${(p) => p.$color || '#000'};
`;

const TreeName = styled.span`
  padding: 0 4px 1px 3px;
  line-height: 20px;
  background: ${(p) => (p.$active ? '#b0cbee' : 'transparent')};
`;

const members = Array.from({ length: 19 }, (_, i) => `GBZ${501 + i}`);

const MemberPanel = () => (
  <Panel $flex="1">
    <Strip><IconButton aria-label="关闭构件列表"><Cross /></IconButton></Strip>
    <DockTabs>
      <DockTab $active>构件列表</DockTab>
      <DockTab>图纸管理</DockTab>
    </DockTabs>
    <ListTools>
      <T icon="docNew" caret>新建</T>
      <T icon="docCopy">复制</T>
      <T icon="docDel">删除</T>
      <T icon="layerCopy">层间复制</T>
      <T icon="archive">存档</T>
      <IconButton aria-label="更多">
        <svg width="8" height="6" viewBox="0 0 8 6"><path d="M0 0L4 3L0 6ZM4 0L8 3L4 6Z" fill="#333" /></svg>
      </IconButton>
    </ListTools>
    <SearchRow>
      <input type="text" placeholder="搜索构件..." aria-label="搜索构件" />
      <Icon name="searchBlue" />
    </SearchRow>
    <Tree>
      <TreeRow $indent={10}><Expander />柱</TreeRow>
      <TreeRow $indent={30}><Expander />暗柱</TreeRow>
      {members.map((m) => (
        <TreeRow key={m} $indent={60}><TreeName $active={m === 'GBZ508'}>{m}</TreeName></TreeRow>
      ))}
    </Tree>
  </Panel>
);

const Check = styled.input.attrs({ type: 'checkbox' })`
  appearance: none;
  flex: none;
  display: block;
  width: 14px;
  height: 14px;
  border: 1px solid ${(p) => (p.disabled ? '#a8a8a8' : '#777')};
  border-radius: 2px;
  background: ${(p) => (p.disabled ? '#f0f0f0' : '#fff')};

  &:checked::after {
    content: '';
    display: block;
    width: 4px;
    height: 7px;
    margin: 1px auto;
    border: solid #999;
    border-width: 0 2px 2px 0;
    transform: rotate(45deg);
  }
`;

const PropTable = styled.table`
  width: 334px;
  border-collapse: collapse;
  table-layout: fixed;

  th, td {
    height: 21px;
    padding: 0 3px;
    font-weight: 400;
    text-align: left;
    border-right: 1px solid #d0d0d0;
    border-bottom: 1px solid #d0d0d0;
    white-space: nowrap;
    overflow: hidden;
  }
  thead th, tbody th {
    background: #efefef;
    color: #333;
    text-align: center;
  }
  thead th {
    height: 20px;
  }
  td input {
    margin: 0 auto;
  }
`;

const PropName = styled.td`
  color: #1a5fe8;
`;

const PropValue = styled.td`
  color: ${(p) => (p.$locked ? '#8a8a8a' : '#000')};
  background: ${(p) => (p.$locked ? '#e9e9e9' : '#fff')};

  svg {
    display: inline-block;
    vertical-align: 2px;
  }
`;

const PropBody = styled.div`
  display: flex;
  flex: 1;
  min-height: 0;
  overflow: hidden;
  border-bottom: 1px solid #c6c8cd;
`;

const Thumb = styled.div`
  width: 8px;
  height: ${(p) => p.$height};
  margin: ${(p) => p.$margin};
  border-radius: 4px;
  background: #cacaca;
  flex: none;
`;

const PropFooter = styled.div`
  flex: none;
  height: 29px;
  padding: 3px 5px;
  background: #efefef;
`;

const PlainButton = styled.button`
  width: 80px;
  height: 24px;
  border: 1px solid #c4c4c4;
  border-radius: 3px;
  background: #fff;
`;

const Rebar = () => (
  <svg width="9" height="10" viewBox="0 0 10 11" fill="none" stroke="#000">
    <circle cx="5" cy="4.500" r="3" />
    <path d="M5 0V11M1 7.500H9M1 9.500H9" />
  </svg>
);

const props = [
  ['名称', 'GBZ508'],
  ['截面形状', 'L-d形'],
  ['结构类别', '暗柱'],
  ['定额类别', '普通柱'],
  ['截面宽度(B边)(...', '800', true],
  ['截面高度(H边)(...', '500', true],
  ['全部纵筋', <>8<Rebar />8+9<Rebar />22</>],
  ['材质', '现浇混凝土'],
];

const PropPanel = () => (
  <Panel $flex="0 0 245px">
    <Strip><IconButton aria-label="关闭属性列表"><Cross /></IconButton></Strip>
    <DockTabs>
      <DockTab $active>属性列表</DockTab>
      <DockTab>图层管理</DockTab>
    </DockTabs>
    <PropBody>
      <PropTable>
        <colgroup><col width="22" /><col width="101" /><col width="170" /><col width="41" /></colgroup>
        <thead>
          <tr><th /><th>属性名称</th><th>属性值</th><th>附加</th></tr>
        </thead>
        <tbody>
          {props.map(([name, value, locked], i) => (
            <tr key={name}>
              <th>{i + 1}</th>
              <PropName>{name}</PropName>
              <PropValue $locked={locked}>{value}</PropValue>
              <td>{i > 0 && <Check aria-label={`附加 ${name}`} />}</td>
            </tr>
          ))}
        </tbody>
      </PropTable>
      <Thumb $height="50px" $margin="13px 0 0 3px" />
    </PropBody>
    <PropFooter><PlainButton>截面编辑</PlainButton></PropFooter>
  </Panel>
);

const Splitter = styled.div`
  display: flex;
  align-items: center;
  flex: none;
  width: ${(p) => p.$width}px;
  background: #fff;
`;

const SplitHandle = styled.button`
  display: flex;
  align-items: center;
  justify-content: center;
  width: 4px;
  height: 100px;
  background: #626973;
`;

/* ---------- drawing ---------- */

const Canvas = styled.div`
  position: relative;
  flex: 1;
  min-width: 0;
  overflow: hidden;
  background: #000;
`;

const Sheet = styled.svg`
  width: 100%;
  height: 100%;
  fill: none;

  .g { stroke: #0f0; }
  .y { stroke: #ff0; }
  .r { stroke: #f00; }
`;

const DimText = styled.text`
  font-family: 'Roboto Condensed', Roboto, sans-serif;
  font-size: 28px;
  font-weight: 100;
  text-anchor: middle;
  fill: #0f0;
`;

const AxisText = styled.text`
  font-family: Roboto, sans-serif;
  font-size: 16px;
  text-anchor: middle;
  fill: ${(p) => p.$color};
`;

const VDim = ({ x, ys }) => (
  <g className="g">
    <path d={`M${x} 485V769.500`} />
    {ys.map((y) => <path key={y} d={`M${x - 37} ${y}H${x + 11}M${x - 5} ${y - 5}L${x + 5} ${y + 5}`} />)}
  </g>
);

const VText = ({ x, y, children }) => (
  <DimText transform={`translate(${x} ${y}) rotate(-90)`}>{children}</DimText>
);

const bars = [
  [581, 673], [581, 739], [937.5, 739.5], [1003.500, 739.5],
  [1294.500, 515], [1320, 515], [1320, 543.5], [1294.500, 581], [1320, 581],
  [1632, 673], [1632, 739], [1622, 390.5],
];

const Drawing = () => (
  <Sheet viewBox="570 166 1065 844" preserveAspectRatio="xMinYMin slice">
    <g className="g">
      <path d="M791 166V1010M1511 166V1010" />
      <path d="M1055.500 304V340M570 643H610.500V776.500H570" />
      <path d="M601 785V833M570 822.500H611.500M596 828L606 817" />
      <path d="M906 852H1351M917.500 815V862M1023 815V862M1339.500 815V862" />
      <path d="M912 858L923 846M1018 858L1028 846M1334 858L1345 846" />
      <path d="M1242 431.500H1310.500V478.500M1273 478.500H1348V616.500H1273Z" />
      <path d="M1612 785V833M1601 822.500H1635M1607 828L1617 817" />
      <path d="M1594.500 333V457.500M1589.500 328L1600 338.500M1589.500 368L1600 378" />
      <path d="M1573 431.500H1578M1580 430.500H1589M1574 433.500H1589M1573 436.500H1578M1581 435V438M1574 439.500H1588M1576 442.500H1583M1585 441V446M1573 445.500H1588M1574 448.500H1579M1581 447L1588 451M1573 452.500H1589M1574 455.500H1588M1576 430V437M1583 430V436M1586 430V434M1577 444V456M1580 446V456M1585 449V456M1575 450.500H1584" />
    </g>
    <g className="y">
      <path d="M570 653.500H601V759H570M917.500 730V788M1023 730V788M917.500 759H1023" />
      <path d="M896 788.500H960L967 773L974 804L980.500 788.500H1044" />
      <path d="M1230 495.500H1340V600.500H1230" />
      <path d="M1582.500 632V696L1599 703L1567 709.500L1582.500 716.500V780M1582 653.500H1635M1582 759H1635M1612 653V759" />
    </g>
    <g className="r">
      <rect x="924.500" y="264.500" width="197.500" height="39" rx="3" />
      <path d="M1016.500 260V254A3.500 3.500 0 0 1 1023.500 254V287A3.500 3.500 0 0 1 1016.500 287V282" />
      <path d="M1063.500 260V254A3.500 3.500 0 0 1 1070.500 254V287A3.500 3.500 0 0 1 1063.500 287V282" />
      <path d="M914.500 340V275Q914.500 272.500 917 272.500H945Q948 272.500 947 276L943 281M954 340V280Q954 275.500 950 275.500H923Q919.500 276 921 279L925 285" />
      <path d="M1112 298L1117 303.500M1116.500 293.500L1122 299" />
      <path d="M570 666.500H582Q588 666.500 588 673V739Q588 745.500 582 745.500H570M588 676L577 687M577 667L570 676" />
      <path d="M930.500 730V788M1010 730V788M930.500 738Q930.500 745.500 937 745.500H1004Q1010 745.500 1010 738" />
      <path d="M1230 508.500H1321Q1326.500 508.500 1326.500 514V581Q1326.500 587 1321 587H1230M1315.500 567L1326.500 578M1306 576L1317 587" />
      <path d="M1582 666.500H1635M1582 745.500H1635M1635 666.500H1631Q1625.500 667 1625.500 673V739Q1625.500 745 1631 745.500" />
      <path d="M1587 333.500H1602M1587 373.500H1602" />
      {bars.map(([x, y]) => <circle key={`${x}-${y}`} cx={x} cy={y} r="3" />)}
    </g>
    <VDim x={664.5} ys={[495.5, 653.5, 759]} />
    <VDim x={1403} ys={[495.5, 600.5, 759]} />
    <VText x={651} y={583}>300</VText>
    <VText x={651} y={715}>200</VText>
    <VText x={1390} y={557}>200</VText>
    <VText x={1390} y={689}>300</VText>
    <DimText x="961" y="839">200</DimText>
    <DimText x="1172" y="839">600</DimText>
    <DimText x="1279" y="424">5C22</DimText>
    <DimText x="1126" y="342">C8@200</DimText>
    <path d="M620 959V942" stroke="#0f0" strokeWidth="4" />
    <path d="M614 943L620 930L626 943Z" fill="#0f0" />
    <path d="M620 960H639" stroke="#f00" strokeWidth="4" />
    <path d="M638 954L651 960L638 966Z" fill="#f00" />
    <circle cx="620" cy="960" r="5.500" fill="#0000c0" />
    <AxisText x="620" y="930" $color="#0f0">Y</AxisText>
    <AxisText x="656" y="966" $color="#f00">X</AxisText>
  </Sheet>
);

const ToolBox = styled.div`
  position: absolute;
  top: 0;
  left: 0;
  width: 124px;
  height: 148px;
  border: 1px solid #2b66a5;
  background: #1d446f;
`;

const ToolBoxHead = styled.div`
  display: flex;
  align-items: center;
  justify-content: flex-end;
  height: 12px;
  padding-right: 5px;
  background: #17355a;
  border-bottom: 1px solid #112a48;
`;

const ToolBoxBody = styled.div`
  display: grid;
  gap: 6px;
  padding: 6px;
`;

const DarkButton = styled.button`
  display: grid;
  grid-template-columns: 14px 1fr 12px;
  align-items: center;
  height: 26px;
  border: 1px solid #15375c;
  border-radius: 3px;
  background: #204f80;
  color: #fff;

  span {
    grid-column: 2;
  }
`;

const ViewBar = styled.div`
  position: absolute;
  top: 0;
  right: 0;
  display: flex;
  flex-direction: column;
  align-items: center;
  width: 33px;
  height: 227px;
  padding-top: 10px;
  border: 1px solid #b4b6ba;
  border-width: 1px 1px 2px;
  border-radius: 2px;
  background: #999ba0;
`;

const ViewTool = styled.button`
  display: flex;
  flex-direction: column;
  align-items: center;
  gap: 5px;
  height: ${(p) => p.$height}px;
`;

const CubeText = styled.text`
  font-family: Roboto, sans-serif;
  font-size: 9px;
  fill: #2d3b4e;
`;

const Cube = ({ fill, top, children }) => (
  <svg width="26" height="24" viewBox="0 0 26 24" fill="none" stroke="#35455c">
    <path d="M1.500 5.500L6.500 .500H24.500V18.500L19.500 23.500H1.500Z" fill={fill} />
    <path d="M1.500 5.500L6.500 .500H24.500L19.500 5.500Z" fill={top || fill} />
    <path d="M19.500 5.500V23.500" />
    {children}
  </svg>
);

const Dialog = styled.div`
  position: absolute;
  left: 114px;
  top: 165px;
  display: flex;
  flex-direction: column;
  width: 554px;
  height: 406px;
  background: #efefef;
  border: 1px solid #b9c4d0;
  border-top: 0;
`;

const DialogHead = styled.div`
  display: flex;
  align-items: center;
  justify-content: space-between;
  flex: none;
  height: 27px;
  margin: 0 -1px;
  padding: 0 10px 0 9px;
  background: #2c7fe1;
  color: #fff;
`;

const CheckRow = styled.div`
  display: flex;
  flex: none;
  gap: 12px;
  padding: 11px 12px 7px;
`;

const CheckLabel = styled.label`
  display: flex;
  align-items: center;
  gap: 3px;
  white-space: nowrap;
`;

const BlueCheck = styled(Check)`
  border: 0;
  background: #4f9ff5;

  &:checked::after {
    margin: 2px auto;
    border-color: #fff;
  }
`;

const IssueFrame = styled.div`
  flex: 1;
  margin: 0 11px;
  border: 1px solid #c0c0c0;
  background: #fff;
`;

const IssueTable = styled.table`
  width: 490px;
  border-collapse: collapse;
  table-layout: fixed;

  th, td {
    height: 21px;
    padding: 0 2px;
    font-weight: 400;
    text-align: left;
    border-right: 1px solid #c8c8c8;
    border-bottom: 1px solid #c8c8c8;
    white-space: nowrap;
  }
  th {
    background: #efefef;
    color: #333;
    text-align: center;
  }
  tbody th {
    padding: 0;
  }
`;

const DialogActions = styled.div`
  display: flex;
  justify-content: flex-end;
  flex: none;
  margin: 0 11px;
  padding: 6px 0;
  border-bottom: 1px solid #a9a9ab;
`;

const PrimaryButton = styled.button`
  width: 80px;
  height: 26px;
  border-radius: 3px;
  background: #2c7fe1;
  color: #fff;
`;

const Hint = styled.p`
  flex: none;
  margin: 0;
  padding: 7px 11px 11px;
`;

const checks = ['尺寸标注有误', '纵筋信息有误', '箍筋信息有误', '未使用的标注', '柱名称缺失'];

const CheckDialog = () => (
  <Dialog role="dialog" aria-label="校核柱大样">
    <DialogHead>
      校核柱大样
      <IconButton aria-label="关闭"><Cross size={9} color="#fff" /></IconButton>
    </DialogHead>
    <CheckRow>
      {checks.map((c) => (
        <CheckLabel key={c}><BlueCheck defaultChecked />{c}</CheckLabel>
      ))}
    </CheckRow>
    <IssueFrame>
      <IssueTable>
        <colgroup><col width="7" /><col width="99" /><col width="73" /><col width="311" /></colgroup>
        <thead><tr><th /><th>名称</th><th>所属楼层</th><th>问题描述</th></tr></thead>
        <tbody>
          <tr><th>1</th><td>GBZ508</td><td>第27层</td><td>识别的柱子中存在其他纵筋</td></tr>
        </tbody>
      </IssueTable>
    </IssueFrame>
    <DialogActions><PrimaryButton>重新校核</PrimaryButton></DialogActions>
    <Hint>请按照不同错误类别的提示信息进行修改。</Hint>
  </Dialog>
);

const DrawingArea = () => (
  <Canvas>
    <Drawing />
    <ToolBox>
      <ToolBoxHead><IconButton aria-label="关闭工具箱"><Cross color="#a9cdf2" /></IconButton></ToolBoxHead>
      <ToolBoxBody>
        <DarkButton><span>提取边线</span></DarkButton>
        <DarkButton><span>提取标注</span></DarkButton>
        <DarkButton><span>提取钢筋线</span></DarkButton>
        <DarkButton><span>点选识别</span><Caret color="#fff" size={8} /></DarkButton>
      </ToolBoxBody>
    </ToolBox>
    <ViewBar>
      <ViewTool $height={29} aria-label="动态观察">
        <svg width="26" height="24" viewBox="0 0 26 24" fill="none" stroke="#55657a">
          <circle cx="13" cy="12" r="9.500" fill="#aebccb" />
          <path d="M5 9C7 3 14 2 17 5C14 9 9 10 5 9Z" fill="#e6edf3" stroke="none" />
          <path d="M2 19C8 19 18 12 22 6" strokeWidth="1.500" />
          <circle cx="21" cy="6" r="4" fill="#d3dde7" />
          <path d="M1 19L3 15L5 19Z" fill="#55657a" />
        </svg>
      </ViewTool>
      <ViewTool $height={29} aria-label="三维">
        <Cube fill="#8698b0"><CubeText x="7" y="20" stroke="none">3D</CubeText></Cube>
      </ViewTool>
      <ViewTool $height={39} aria-label="线框">
        <Cube fill="#cfe6fd" top="#8698b0"><path d="M1.500 23.500L6.500 18.500H19.500M6.500 5.500V18.500" /></Cube>
        <Caret color="#35455c" size={6} />
      </ViewTool>
      <ViewTool $height={39} aria-label="视图方向">
        <Cube fill="#8698b0" />
        <Caret color="#35455c" size={6} />
      </ViewTool>
      <ViewTool $height={44} aria-label="旋转视图">
        <svg width="26" height="24" viewBox="0 0 26 24" fill="none" stroke="#454f5c" strokeWidth="2">
          <path d="M21 17A10 10 0 1 1 21 7M23 2V8H16" />
        </svg>
        <Caret color="#35455c" size={6} />
        <svg width="24" height="1"><path d="M0 .500H24" stroke="#666" /></svg>
      </ViewTool>
      <ViewTool $height={24} aria-label="图层">
        <svg width="26" height="24" viewBox="0 0 26 24" fill="none" stroke="#2f4058">
          <path d="M1.500 2.500L3 .500H23L24.500 2.500V23.500H1.500ZM1.500 3.500H24.500" fill="#8fa3bd" />
          <path d="M4 6L6 8L8 5M15 6L17 8L19 5M13 7V21" />
          <path d="M4.500 10.500H6.500V12.500H4.500ZM4.500 14.500H6.500V16.500H4.500ZM4.500 18.500H6.500V20.500H4.500ZM16.500 10.500H18.500V12.500H16.500ZM16.500 14.500H18.500V16.500H16.500ZM16.500 18.500H18.500V20.500H16.500ZM8 11.500H10M8 15.500H10M8 19.500H10M20 11.500H22M20 15.500H22M20 19.500H22" />
        </svg>
      </ViewTool>
    </ViewBar>
    <CheckDialog />
  </Canvas>
);

/* ---------- display settings ---------- */

const SettingTabs = styled.div`
  display: flex;
  align-items: flex-end;
  flex: none;
  gap: 3px;
  height: 28px;
  padding-left: 2px;
  background: #efefef;
  border-bottom: 1px solid #c6c8cd;
`;

const SettingTab = styled.button`
  width: 75px;
  height: ${(p) => (p.$active ? 25 : 22)}px;
  margin-bottom: ${(p) => (p.$active ? -1 : 0)}px;
  border: 1px solid ${(p) => (p.$active ? '#c0c2c7' : '#e0e0e1')};
  border-bottom: 0;
  border-radius: 3px 3px 0 0;
  background: ${(p) => (p.$active ? '#fff' : '#e0e0e1')};
  color: ${(p) => (p.$active ? '#2c7fe1' : '#444')};
`;

const RadioRow = styled.div`
  display: grid;
  grid-template-columns: repeat(3, 91px);
  align-items: center;
  flex: none;
  height: 29px;
  padding-left: 6px;

  label {
    display: flex;
    align-items: center;
    gap: 7px;
  }
`;

const Radio = styled.input.attrs({ type: 'radio' })`
  appearance: none;
  width: 14px;
  height: 14px;
  border: 1px solid #777;
  border-radius: 50%;
  background: #fff;

  &:checked {
    border-color: #6b7f96;
    background: radial-gradient(#4f9ff5 0 3px, #fff 4px);
  }
`;

const FloorBox = styled.div`
  display: flex;
  flex: 1;
  min-height: 0;
  overflow: hidden;
  border: 1px solid #bcbfc5;
`;

const FloorTree = styled.div`
  flex: 1;
  padding-top: 3px;

  label {
    display: flex;
    align-items: center;
    gap: 7px;
  }
`;

const RootCheck = styled(Check)`
  margin-left: 4px;
  box-shadow: inset 0 0 0 1px #f0f0f0, inset 0 0 0 2px #c4c4c4;
`;

const SettingFooter = styled.div`
  display: flex;
  align-items: center;
  flex: none;
  height: 38px;
`;

const floors = [
  '构架层',
  '屋顶层',
  ...Array.from({ length: 26 }, (_, i) => `第${27 - i}层`),
  '首层',
];

const SettingPanel = () => (
  <Panel $width={280}>
    <Strip><IconButton aria-label="关闭显示设置"><Cross /></IconButton></Strip>
    <PanelTitle>显示设置</PanelTitle>
    <SettingTabs>
      <SettingTab>图元显示</SettingTab>
      <SettingTab $active>楼层显示</SettingTab>
    </SettingTabs>
    <RadioRow>
      <label><Radio name="floor" defaultChecked />当前楼层</label>
      <label><Radio name="floor" />相邻楼层</label>
      <label><Radio name="floor" />全部楼层</label>
    </RadioRow>
    <FloorBox>
      <FloorTree>
        <TreeRow $indent={6} $color="#777">
          <Expander />
          <label><RootCheck disabled />全部楼层</label>
        </TreeRow>
        {floors.map((f) => (
          <TreeRow key={f} $indent={43} $color="#777">
            <label><Check disabled defaultChecked={f === '第27层'} />{f}</label>
          </TreeRow>
        ))}
      </FloorTree>
      <Thumb $height="calc(100% - 73px)" $margin="16px 3px 0 0" />
    </FloorBox>
    <SettingFooter>
      <CheckLabel><Check />其他区域图元亮显</CheckLabel>
    </SettingFooter>
  </Panel>
);

/* ---------- status bar ---------- */

const StatusBar = styled.footer`
  display: grid;
  grid-template-columns: 263px 83px 133px 103px 104px auto 1fr;
  align-items: center;
  flex: none;
  height: 30px;
  padding: 2px 36px 0 2px;
  background: #dcdcdf;
  border-bottom: 1px solid #fff;
  color: #333;
  white-space: nowrap;

  > :last-child {
    text-align: right;
  }
`;

const Coordinates = styled.span`
  font-size: 13px;
`;

const Field = styled.span`
  display: flex;
  gap: 10px;
`;

const StatusTools = styled.div`
  display: flex;
  align-items: center;
  gap: 4px;
`;

const StatusButton = styled.button`
  display: flex;
  align-items: center;
  justify-content: center;
  gap: 4px;
  width: ${(p) => p.$width}px;
  height: 25px;
  border: 1px solid ${(p) => (p.$active ? '#2f8be8' : '#a0a0a3')};
  background: ${(p) => (p.$active ? '#fff' : '#cfcfd2')};
`;

const StatusIcon = ({ children }) => (
  <svg width="18" height="18" viewBox="0 0 18 18" fill="none" stroke="#555">{children}</svg>
);

const Status = () => (
  <StatusBar>
    <Coordinates>X = 2573416 Y = 1692017</Coordinates>
    <Field><span>层高:</span><span>2.99</span></Field>
    <Field><span>标高:</span><span>76.01~79</span></Field>
    <span>0</span>
    <Field><span>隐藏:</span><span>0</span></Field>
    <StatusTools>
      <StatusButton $width={25} aria-label="正交">
        <StatusIcon><path d="M3.500 3V14.500H15M3.500 11H7V14.500" /></StatusIcon>
      </StatusButton>
      <StatusButton $width={36} $active aria-label="对象捕捉">
        <StatusIcon><path d="M3.500 3.500H15.500V15.500H3.500Z" stroke={BLUE} strokeWidth="1.500" /><path d="M1 1H6V6H1Z" fill="#f5a05a" stroke={ORANGE} /></StatusIcon>
        <Caret size={5} />
      </StatusButton>
      <StatusButton $width={25} aria-label="交点">
        <StatusIcon><path d="M2 2L16 16M16 2L2 16" stroke="#777" /></StatusIcon>
      </StatusButton>
      <StatusButton $width={36} aria-label="角度">
        <StatusIcon><path d="M15 2L3 14.500H16M8 9V12" /><circle cx="8" cy="9" r="1.500" fill="#333" /></StatusIcon>
        <Caret size={5} />
      </StatusButton>
      <StatusButton $width={36} aria-label="偏移方式">
        <StatusIcon><path d="M4.500 1V8M1 4.500H8" /><path d="M7 10H16V15H7Z" fill="#444" /></StatusIcon>
        <Caret size={5} />
      </StatusButton>
      <StatusButton $width={73}>跨图层选择</StatusButton>
      <StatusButton $width={61}>折线选择</StatusButton>
      <span>按鼠标左键指定第一个角点，或拾取构件图元</span>
    </StatusTools>
    <span>500 FPS</span>
  </StatusBar>
);

const TaskBar = styled.div`
  display: flex;
  flex: none;
  height: 10px;
  padding-left: 49px;
  overflow: hidden;
  background: linear-gradient(90deg, #22323c, #1d2c38 60%, #2a3338);
  color: #fff;
`;

const TaskSearch = styled.div`
  width: 343px;
  background: #f2f2f2;
  border-top: 1px solid #aaa;
`;

const Clock = styled.time`
  margin: 4px 74px 0 auto;
`;

const App = () => (
  <Page>
    <GlobalStyle />
    <AppHeader />
    <Ribbon />
    <ContextBar>
      {pickers.map(([label, value]) => (
        <Picker key={label}>
          <select aria-label={label}><option>{value}</option></select>
          <Caret size={6} />
        </Picker>
      ))}
    </ContextBar>
    <Workspace>
      <NavPanel />
      <MidColumn>
        <MemberPanel />
        <PropPanel />
      </MidColumn>
      <Splitter $width={4}>
        <SplitHandle aria-label="收起左侧">
          <svg width="4" height="6" viewBox="0 0 4 6"><path d="M4 0V6L1 3Z" fill="#c5c8cc" /></svg>
        </SplitHandle>
      </Splitter>
      <DrawingArea />
      <Splitter $width={5}>
        <SplitHandle aria-label="收起右侧">
          <svg width="4" height="6" viewBox="0 0 4 6"><path d="M0 0V6L3 3Z" fill="#c5c8cc" /></svg>
        </SplitHandle>
      </Splitter>
      <SettingPanel />
    </Workspace>
    <Status />
    <TaskBar>
      <TaskSearch />
      <svg width="350" height="10" viewBox="392 0 350 10">
        <path d="M638 0H686V10H638Z" fill="#55646c" />
        <circle cx="515" cy="16" r="9" fill="#2fbfd0" />
        <path d="M554 10L558 8H573V10Z" fill="#4a1420" />
        <path d="M604 9H622V10H604Z" fill="#2d6fb5" />
        <path d="M652 8H672V10H652Z" fill="#7fb6f5" />
        <path d="M701 8H723V10H701Z" fill="#aeb6ba" />
      </svg>
      <Clock>17:32</Clock>
    </TaskBar>
  </Page>
);

export default App;
